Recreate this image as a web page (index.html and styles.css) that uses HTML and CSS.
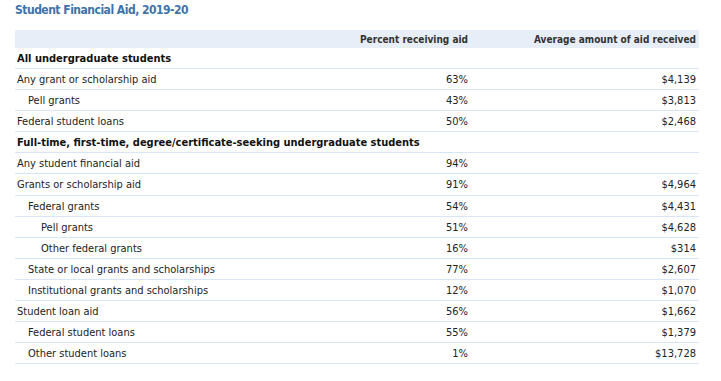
FILE: index.html
```html
<!DOCTYPE html>
<html lang="en">
<head>
  <meta charset="UTF-8" />
  <title>Student Financial Aid</title>
  <link rel="stylesheet" href="styles.css">
</head>
<body>
  <div class="section">
    <h2 class="section-title">Student Financial Aid, 2019-20</h2>

    <table class="aid-table">
      <colgroup>
        <col class="col-label" />
        <col class="col-pct" />
        <col class="col-amt" />
      </colgroup>
      <thead>
        <tr>
          <th></th>
          <th>Percent receiving aid</th>
          <th>Average amount of aid received</th>
        </tr>
      </thead>
      <tbody>
        <tr class="group">
          <td colspan="3">All undergraduate students</td>
        </tr>
        <tr>
          <td>Any grant or scholarship aid</td>
          <td class="num">63%</td>
          <td class="num">$4,139</td>
        </tr>
        <tr>
          <td class="indent1">Pell grants</td>
          <td class="num">43%</td>
          <td class="num">$3,813</td>
        </tr>
        <tr>
          <td>Federal student loans</td>
          <td class="num">50%</td>
          <td class="num">$2,468</td>
        </tr>
        <tr class="group">
          <td colspan="3">Full-time, first-time, degree/certificate-seeking undergraduate students</td>
        </tr>
        <tr>
          <td>Any student financial aid</td>
          <td class="num">94%</td>
          <td class="num"></td>
        </tr>
        <tr>
          <td>Grants or scholarship aid</td>
          <td class="num">91%</td>
          <td class="num">$4,964</td>
        </tr>
        <tr>
          <td class="indent1">Federal grants</td>
          <td class="num">54%</td>
          <td class="num">$4,431</td>
        </tr>
        <tr>
          <td class="indent2">Pell grants</td>
          <td class="num">51%</td>
          <td class="num">$4,628</td>
        </tr>
        <tr>
          <td class="indent2">Other federal grants</td>
          <td class="num">16%</td>
          <td class="num">$314</td>
        </tr>
        <tr>
          <td class="indent1">State or local grants and scholarships</td>
          <td class="num">77%</td>
          <td class="num">$2,607</td>
        </tr>
        <tr>
          <td class="indent1">Institutional grants and scholarships</td>
          <td class="num">12%</td>
          <td class="num">$1,070</td>
        </tr>
        <tr>
          <td>Student loan aid</td>
          <td class="num">56%</td>
          <td class="num">$1,662</td>
        </tr>
        <tr>
          <td class="indent1">Federal student loans</td>
          <td class="num">55%</td>
          <td class="num">$1,379</td>
        </tr>
        <tr>
          <td class="indent1">Other student loans</td>
          <td class="num">1%</td>
          <td class="num">$13,728</td>
        </tr>
      </tbody>
    </table>
  </div>
</body>
</html>
```

FILE: styles.css
```css
body {
  font-family: "DejaVu Sans Condensed", "DejaVu Sans", Verdana, sans-serif;
  font-size: 11px;
  color: #222;
  background-color: #fff;
  margin: 0;
  padding: 0 0 0 15px;
}

.section {
  width: 684px;
}

.section-title {
  font-size: 12px;
  font-weight: bold;
  letter-spacing: -0.5px;
  color: #3e72aa;
  margin: 0;
  padding-top: 3px;
  height: 27px;
}

.aid-table {
  width: 684px;
  border-collapse: collapse;
  table-layout: fixed;
}

.col-label {
  width: 342px;
}

.col-pct {
  width: 114px;
}

.col-amt {
  width: 228px;
}

.aid-table th {
  background-color: #e7eef7;
  color: #333;
  font-size: 10px;
  font-weight: bold;
  text-align: right;
  line-height: 13px;
  padding: 3px 3px 2px;
  white-space: nowrap;
}

.aid-table td {
  line-height: 13.08px;
  padding: 4px 3px 3px 2px;
  border-bottom: 1px solid #d6e5f7;
  white-space: nowrap;
}

.aid-table .group td {
  font-weight: bold;
  color: #111;
}

.aid-table td.num {
  text-align: right;
  padding-right: 3px;
}

.aid-table td.indent1 {
  padding-left: 13px;
}

.aid-table td.indent2 {
  padding-left: 26px;
}
```
